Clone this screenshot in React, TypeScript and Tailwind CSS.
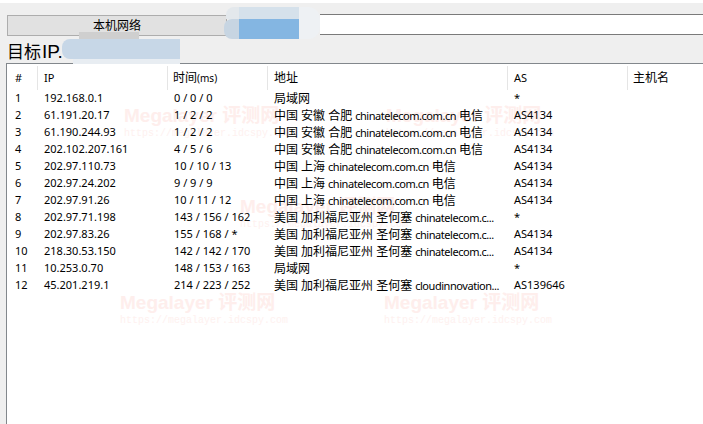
const rows = [
  ['1', '192.168.0.1', '0 / 0 / 0', '局域网', '', '', '*'],
  ['2', '61.191.20.17', '1 / 2 / 2', '中国 安徽 合肥', 'chinatelecom.com.cn', '电信', 'AS4134'],
  ['3', '61.190.244.93', '1 / 2 / 2', '中国 安徽 合肥', 'chinatelecom.com.cn', '电信', 'AS4134'],
  ['4', '202.102.207.161', '4 / 5 / 6', '中国 安徽 合肥', 'chinatelecom.com.cn', '电信', 'AS4134'],
  ['5', '202.97.110.73', '10 / 10 / 13', '中国 上海', 'chinatelecom.com.cn', '电信', 'AS4134'],
  ['6', '202.97.24.202', '9 / 9 / 9', '中国 上海', 'chinatelecom.com.cn', '电信', 'AS4134'],
  ['7', '202.97.91.26', '10 / 11 / 12', '中国 上海', 'chinatelecom.com.cn', '电信', 'AS4134'],
  ['8', '202.97.71.198', '143 / 156 / 162', '美国 加利福尼亚州 圣何塞', 'chinatelecom.c...', '', '*'],
  ['9', '202.97.83.26', '155 / 168 / *', '美国 加利福尼亚州 圣何塞', 'chinatelecom.c...', '', 'AS4134'],
  ['10', '218.30.53.150', '142 / 142 / 170', '美国 加利福尼亚州 圣何塞', 'chinatelecom.c...', '', 'AS4134'],
  ['11', '10.253.0.70', '148 / 153 / 163', '局域网', '', '', '*'],
  ['12', '45.201.219.1', '214 / 223 / 252', '美国 加利福尼亚州 圣何塞', 'cloudinnovation...', '', 'AS139646'],
];

// repeated watermark of the source screenshot
const marks = [
  { left: 124, top: 105 },
  { left: 386, top: 105 },
  { left: 240, top: 196 },
  { left: 120, top: 292 },
  { left: 384, top: 292 },
];

function Watermark({ left, top }: { left: number; top: number }) {
  return (
    <div className="absolute whitespace-nowrap" style={{ left, top }}>
      <div className="text-[19px] leading-[22px] font-bold text-[#feeeec] font-['Liberation_Sans','Noto_Sans_CJK_SC',sans-serif]">
        Megalayer 评测网
      </div>
      <div className="text-[10px] leading-[14px] text-[#fef1ef] font-['Liberation_Mono',monospace]">
        https://megalayer.idcspy.com
      </div>
    </div>
  );
}

export default function App() {
  return (
    <div className="relative h-[424px] w-[703px] overflow-hidden bg-[#efefef] font-['Noto_Sans','Noto_Sans_CJK_SC',sans-serif] text-[11px] text-black">
      <div className="h-[3px] bg-white" />

      {/* top bar */}
      <div className="flex h-[32px] items-start pt-[11px]">
        <div className="mt-[1px] ml-[7px] flex h-[21px] w-[220px] items-center justify-center border border-[#adadad] bg-[#e1e1e1] text-[12px]">
          本机网络
        </div>
        <div className="ml-[93px] h-[21px] flex-1 border-y border-[#7a7a7a] bg-white" />
      </div>

      {/* target row */}
      <div className="flex h-[28px] items-center gap-[1px] pl-[7px] pt-[7px] font-['Liberation_Sans','Noto_Sans_CJK_SC',sans-serif]">
        <span className="text-[17px]">目标</span>
        <span className="text-[19px]">IP.</span>
      </div>

      {/* result table */}
      <div className="relative ml-[6px] h-[361px] border-t border-l border-[#82878c] bg-white pt-[2px]">
        <div className="flex h-[24px] items-center text-[12px]">
          <div className="flex h-full w-[31px] items-center border-r border-[#e5e5e5] pl-[8px] text-[11px]">#</div>
          <div className="flex h-full w-[130px] items-center border-r border-[#e5e5e5] pl-[6px] text-[11px]">IP</div>
          <div className="flex h-full w-[100px] items-center border-r border-[#e5e5e5] pl-[5px]">
            时间<span className="text-[10px]">(ms)</span>
          </div>
          <div className="flex h-full w-[240px] items-center border-r border-[#e5e5e5] pl-[6px]">地址</div>
          <div className="flex h-full w-[120px] items-center border-r border-[#e5e5e5] pl-[6px] text-[11px]">AS</div>
          <div className="flex h-full flex-1 items-center pl-[5px]">主机名</div>
        </div>
        {rows.map((r) => (
          <div key={r[0]} className="relative z-10 flex h-[17px] items-center whitespace-nowrap">
            <div className="w-[31px] pl-[8px]">{r[0]}</div>
            <div className="w-[130px] pl-[6px]">{r[1]}</div>
            <div className="w-[100px] pl-[6px]">{r[2]}</div>
            <div className="w-[240px] pl-[6px]">
              <span className="text-[12px]">{r[3]}</span>{' '}
              <span className="tracking-[-0.45px]">{r[4]}</span>{' '}
              <span className="text-[12px]">{r[5]}</span>
            </div>
            <div className="pl-[6px]">{r[6]}</div>
          </div>
        ))}
      </div>

      {marks.map((m) => (
        <Watermark key={m.left + '-' + m.top} left={m.left} top={m.top} />
      ))}

      {/* blurred-out parts of the source screenshot */}
      <div className="absolute top-[7px] left-[239px] h-[12px] w-[60px] bg-[#d5e1eb]" />
      <div className="absolute top-[19px] left-[239px] h-[20px] w-[60px] bg-[#84b6e2]" />
      <div className="absolute top-[19px] left-[224px] h-[20px] w-[15px] rounded-l-[8px] bg-[#c7d5e2]" />
      <div className="absolute top-[7px] left-[226px] h-[12px] w-[13px] rounded-tl-[8px] bg-[#e3e8ec]" />
      <div className="absolute top-[7px] left-[299px] h-[32px] w-[21px] rounded-r-[12px] bg-[#eef1f4]" />
      <div className="absolute top-[32px] left-[79px] h-[7px] w-[60px] bg-[#cfcfcf]" />
      <div className="absolute top-[59px] left-[73px] h-[5px] w-[107px] bg-[#e8edf2]" />
      <div className="absolute top-[39px] left-[62px] h-[20px] w-[118px] rounded-l-[8px] bg-[#c7d7e7]" />
    </div>
  );
}
